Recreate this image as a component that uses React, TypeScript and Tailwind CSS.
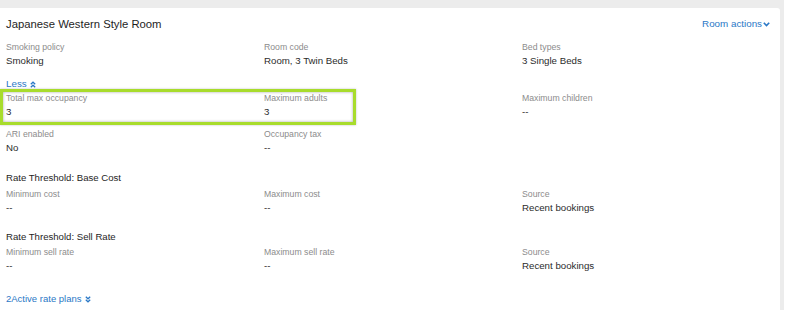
import React from 'react'

interface Field {
  label: string
  value: string
}

const Chevron = () => (
  <svg width="7" height="5" viewBox="0 0 7 5" className="ml-[1px] inline-block">
    <path d="M0.8 0.8 L3.5 3.6 L6.2 0.8" fill="none" stroke="currentColor" strokeWidth="1.6" />
  </svg>
)

const DoubleChevron = ({ up }: { up?: boolean }) => (
  <svg width="6" height="7" viewBox="0 0 6 7" className={`ml-[3px] inline-block ${up ? 'rotate-180' : ''}`}>
    <path d="M0.8 0.8 L3 2.8 L5.2 0.8 M0.8 3.8 L3 5.8 L5.2 3.8" fill="none" stroke="currentColor" strokeWidth="1.3" />
  </svg>
)

function FieldRow({ fields }: { fields: Field[] }) {
  return (
    <div className="grid grid-cols-[258px_258px_1fr]">
      {fields.map((f, i) => (
        <div key={i}>
          <div className="text-[8.7px] leading-[14px] text-[#8c8c8c]">{f.label}</div>
          <div className="text-[9.7px] leading-[14px] text-[#2b2b2b]">{f.value}</div>
        </div>
      ))}
    </div>
  )
}

export default function App() {
  return (
    <div className="w-[788px] h-[318px] bg-white font-['Liberation_Sans',Arial,sans-serif]">
      <div className="w-[784px] h-[310px] bg-[#ececec] pt-[8px] pr-[4px]">
        <div className="relative h-full bg-white rounded-tr-[3px] pl-[6px] pt-[8px]">
          {/* Header */}
          <div className="flex items-center justify-between pr-[10px] h-[16px]">
            <div className="text-[11.3px] text-[#1e1e1e]">Japanese Western Style Room</div>
            <div className="flex items-center text-[9.8px] text-[#2a78c6]">
              Room actions
              <Chevron />
            </div>
          </div>

          <div className="mt-[8px]">
            <FieldRow
              fields={[
                { label: 'Smoking policy', value: 'Smoking' },
                { label: 'Room code', value: 'Room, 3 Twin Beds' },
                { label: 'Bed types', value: '3 Single Beds' },
              ]}
            />
          </div>

          <div className="mt-[9px] flex items-center h-[14px] text-[9.8px] text-[#2a78c6]">
            Less
            <DoubleChevron up />
          </div>

          <FieldRow
            fields={[
              { label: 'Total max occupancy', value: '3' },
              { label: 'Maximum adults', value: '3' },
              { label: 'Maximum children', value: '--' },
            ]}
          />

          <div className="mt-[8px]">
            <FieldRow
              fields={[
                { label: 'ARI enabled', value: 'No' },
                { label: 'Occupancy tax', value: '--' },
              ]}
            />
          </div>

          {/* Rate Threshold: Base Cost */}
          <div className="mt-[15px] text-[9.6px] leading-[16px] text-[#1e1e1e]">Rate Threshold: Base Cost</div>
          <div className="mt-[1px]">
            <FieldRow
              fields={[
                { label: 'Minimum cost', value: '--' },
                { label: 'Maximum cost', value: '--' },
                { label: 'Source', value: 'Recent bookings' },
              ]}
            />
          </div>

          {/* Rate Threshold: Sell Rate */}
          <div className="mt-[14px] text-[9.6px] leading-[16px] text-[#1e1e1e]">Rate Threshold: Sell Rate</div>
          <FieldRow
            fields={[
              { label: 'Minimum sell rate', value: '--' },
              { label: 'Maximum sell rate', value: '--' },
              { label: 'Source', value: 'Recent bookings' },
            ]}
          />

          <div className="mt-[19px] flex items-center h-[14px] text-[9.5px] text-[#2a78c6]">
            2Active rate plans
            <DoubleChevron />
          </div>

          {/* highlight annotation */}
          <div className="absolute left-[0px] top-[81px] w-[356px] h-[36px] border-[3px] border-[#a8dc2c] shadow-[inset_0_0_3px_rgba(0,0,0,0.35),0_0_2px_rgba(0,0,0,0.25)]" />
        </div>
      </div>
    </div>
  )
}
